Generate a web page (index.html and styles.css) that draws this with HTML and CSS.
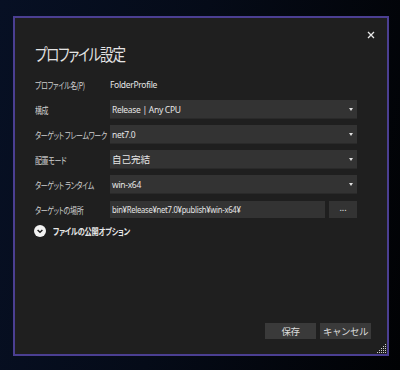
FILE: index.html
```html
<!DOCTYPE html>
<html lang="ja">
<head>
<meta charset="utf-8">
<link rel="stylesheet" href="styles.css">
</head>
<body>
<div class="dialog">
  <button class="close" aria-label="閉じる">
    <svg width="8" height="8" viewBox="0 0 8 8"><path d="M1 1L7 7M7 1L1 7" stroke="#e8e8e8" stroke-width="1.3"/></svg>
  </button>
  <h1 class="title">プロファイル設定</h1>
  <div class="form">
    <div class="label"><span>プロファイル名(P)</span></div>
    <div class="value">FolderProfile</div>

    <div class="label"><span>構成</span></div>
    <div class="select"><span>Release | Any CPU</span><i class="arrow"></i></div>

    <div class="label"><span>ターゲット フレームワーク</span></div>
    <div class="select"><span>net7.0</span><i class="arrow"></i></div>

    <div class="label"><span>配置モード</span></div>
    <div class="select"><span class="jp">自己完結</span><i class="arrow"></i></div>

    <div class="label"><span>ターゲット ランタイム</span></div>
    <div class="select"><span>win-x64</span><i class="arrow"></i></div>

    <div class="label"><span>ターゲットの場所</span></div>
    <div class="pathrow">
      <div class="textbox"><span>bin¥Release¥net7.0¥publish¥win-x64¥</span></div>
      <button class="browse">...</button>
    </div>
  </div>
  <div class="expander">
    <svg class="expicon" width="12" height="12" viewBox="0 0 12 12"><circle cx="6" cy="6" r="6" fill="#f2f2f2"/><path d="M3.6 5L6 7.3L8.4 5" fill="none" stroke="#1f1f1f" stroke-width="1.5"/></svg>
    <span class="exptext">ファイルの公開オプション</span>
  </div>
  <div class="footer">
    <button class="btn">保存</button>
    <button class="btn">キャンセル</button>
  </div>
  <svg class="grip" width="10" height="10" viewBox="0 0 10 10" fill="#d0d0d0">
    <rect x="8" y="0" width="1" height="1"/>
    <rect x="6" y="2" width="1" height="1"/><rect x="8" y="2" width="1" height="1"/>
    <rect x="4" y="4" width="1" height="1"/><rect x="6" y="4" width="1" height="1"/><rect x="8" y="4" width="1" height="1"/>
    <rect x="2" y="6" width="1" height="1"/><rect x="4" y="6" width="1" height="1"/><rect x="6" y="6" width="1" height="1"/><rect x="8" y="6" width="1" height="1"/>
    <rect x="0" y="8" width="1" height="1"/><rect x="2" y="8" width="1" height="1"/><rect x="4" y="8" width="1" height="1"/><rect x="6" y="8" width="1" height="1"/><rect x="8" y="8" width="1" height="1"/>
  </svg>
</div>
</body>
</html>
```
FILE: styles.css
```css
html, body {
  margin: 0;
  padding: 0;
  width: 400px;
  height: 370px;
  overflow: hidden;
}
body {
  background: linear-gradient(100deg, #071024 0%, #050b18 45%, #010204 100%);
  font-family: "Noto Sans", "Noto Sans CJK JP", sans-serif;
  font-feature-settings: "palt";
  color: #d6d6d6;
  padding: 16px 0 0 13px;
  box-sizing: border-box;
}
.dialog {
  position: relative;
  box-sizing: border-box;
  width: 376px;
  height: 340px;
  background: #1f1f1f;
  border: 2px solid #4b3f92;
  display: flex;
  flex-direction: column;
  padding: 24px 30px 15px 20px;
}
.close {
  position: absolute;
  top: 9px;
  right: 8px;
  width: 16px;
  height: 16px;
  padding: 0;
  border: 0;
  background: transparent;
  display: flex;
  align-items: center;
  justify-content: center;
}
.title {
  margin: 0 0 9px 0;
  font-family: "Noto Sans CJK JP", sans-serif;
  font-weight: 400;
  font-size: 16.5px;
  line-height: 24px;
  color: #e4e4e4;
  letter-spacing: -1.5px;
  transform: scaleX(0.82);
  transform-origin: left center;
  white-space: nowrap;
}
.form {
  display: grid;
  grid-template-columns: 75px 1fr;
  grid-auto-rows: 19px;
  row-gap: 6px;
  font-size: 8.5px;
}
.label {
  font-family: "Noto Sans CJK JP", sans-serif;
  font-size: 9.2px;
  color: #cfcfcf;
  display: flex;
  align-items: center;
  white-space: nowrap;
  letter-spacing: -0.5px;
  min-width: 0;
}
.label span {
  display: inline-block;
  flex: none;
  transform: scaleX(0.76);
  transform-origin: left center;
}
.value {
  display: flex;
  align-items: center;
  color: #e6e6e6;
  letter-spacing: -0.3px;
}
.select {
  background: #333333;
  border-bottom: 1px solid #2a2a2a;
  box-sizing: border-box;
  display: flex;
  align-items: center;
  justify-content: space-between;
  padding: 0 4px 0 2px;
  color: #e6e6e6;
  letter-spacing: -0.3px;
}
.jp {
  font-family: "Noto Sans CJK JP", sans-serif;
  font-size: 9.5px;
  letter-spacing: 0;
}
.arrow {
  width: 0;
  height: 0;
  border-left: 2.5px solid transparent;
  border-right: 2.5px solid transparent;
  border-top: 3px solid #e0e0e0;
}
.pathrow {
  display: flex;
  gap: 4px;
  align-items: center;
}
.textbox {
  flex: 1;
  height: 17px;
  background: #333333;
  display: flex;
  align-items: center;
  padding-left: 2px;
  color: #e6e6e6;
  white-space: nowrap;
  overflow: hidden;
  letter-spacing: -0.3px;
}
.textbox span {
  display: inline-block;
  transform: scaleX(0.9);
  transform-origin: left center;
}
.browse {
  width: 28px;
  height: 17px;
  padding: 0 0 4px 0;
  border: 0;
  background: #333333;
  color: #e6e6e6;
  font-family: "Noto Sans", sans-serif;
  font-size: 9px;
  line-height: 13px;
}
.expander {
  margin-top: 2px;
  height: 20px;
  display: flex;
  align-items: center;
  gap: 7px;
  font-family: "Noto Sans CJK JP", sans-serif;
  font-size: 9px;
  font-weight: 700;
  color: #e8e8e8;
  letter-spacing: -0.3px;
}
.exptext {
  display: inline-block;
  transform: scaleX(0.8);
  transform-origin: left center;
  white-space: nowrap;
}
.expicon {
  margin-left: -1px;
}
.footer {
  margin-top: auto;
  margin-right: -14px;
  display: flex;
  justify-content: flex-end;
  gap: 4px;
}
.btn {
  width: 51px;
  height: 16px;
  padding: 0;
  border: 0;
  background: #3a3a3a;
  color: #dcdcdc;
  font-family: "Noto Sans CJK JP", sans-serif;
  font-size: 9.5px;
  line-height: 16px;
  letter-spacing: -0.5px;
}
.grip {
  position: absolute;
  right: 0;
  bottom: 0;
}
```
